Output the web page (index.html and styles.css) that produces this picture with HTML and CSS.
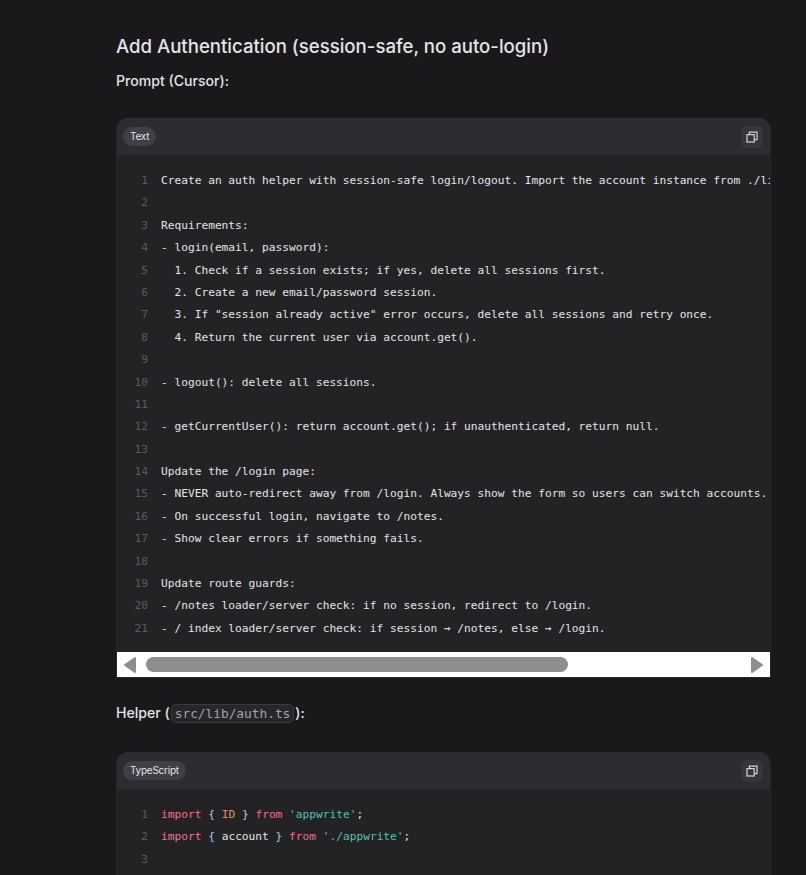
FILE: index.html
```html
<!DOCTYPE html>
<html lang="en">
<head>
    <meta charset="UTF-8">
    <meta name="viewport" content="width=device-width, initial-scale=1.0">
    <title>Add Authentication</title>
    <link rel="stylesheet" href="styles.css">
</head>
<body>
    <main class="doc">
        <h2>Add Authentication (session-safe, no auto-login)</h2>
        <p class="label">Prompt (Cursor):</p>

        <div class="code-card">
            <div class="code-head">
                <span class="lang">Text</span>
                <button class="copy" aria-label="Copy">
                    <svg width="12" height="12" viewBox="0 0 12 12" fill="none" stroke="currentColor" stroke-width="1.2"><rect x="1" y="3.6" width="7.2" height="7.4"/><path d="M3.4 3.4V1.2H11V8.6H8.4"/></svg>
                </button>
            </div>
            <div class="code-body">
                <div class="line"><span class="ln">1</span><span class="lc">Create an auth helper with session-safe login/logout. Import the account instance from ./lib/appwrite.</span></div>
                <div class="line"><span class="ln">2</span><span class="lc"></span></div>
                <div class="line"><span class="ln">3</span><span class="lc">Requirements:</span></div>
                <div class="line"><span class="ln">4</span><span class="lc">- login(email, password):</span></div>
                <div class="line"><span class="ln">5</span><span class="lc">  1. Check if a session exists; if yes, delete all sessions first.</span></div>
                <div class="line"><span class="ln">6</span><span class="lc">  2. Create a new email/password session.</span></div>
                <div class="line"><span class="ln">7</span><span class="lc">  3. If "session already active" error occurs, delete all sessions and retry once.</span></div>
                <div class="line"><span class="ln">8</span><span class="lc">  4. Return the current user via account.get().</span></div>
                <div class="line"><span class="ln">9</span><span class="lc"></span></div>
                <div class="line"><span class="ln">10</span><span class="lc">- logout(): delete all sessions.</span></div>
                <div class="line"><span class="ln">11</span><span class="lc"></span></div>
                <div class="line"><span class="ln">12</span><span class="lc">- getCurrentUser(): return account.get(); if unauthenticated, return null.</span></div>
                <div class="line"><span class="ln">13</span><span class="lc"></span></div>
                <div class="line"><span class="ln">14</span><span class="lc">Update the /login page:</span></div>
                <div class="line"><span class="ln">15</span><span class="lc">- NEVER auto-redirect away from /login. Always show the form so users can switch accounts.</span></div>
                <div class="line"><span class="ln">16</span><span class="lc">- On successful login, navigate to /notes.</span></div>
                <div class="line"><span class="ln">17</span><span class="lc">- Show clear errors if something fails.</span></div>
                <div class="line"><span class="ln">18</span><span class="lc"></span></div>
                <div class="line"><span class="ln">19</span><span class="lc">Update route guards:</span></div>
                <div class="line"><span class="ln">20</span><span class="lc">- /notes loader/server check: if no session, redirect to /login.</span></div>
                <div class="line"><span class="ln">21</span><span class="lc">- / index loader/server check: if session → /notes, else → /login.</span></div>
            </div>
            <div class="hscroll">
                <svg class="arrow" width="14" height="18" viewBox="0 0 14 18"><path d="M12 2V16L2 9Z" fill="#8e8e8e" stroke="#8e8e8e" stroke-width="2" stroke-linejoin="round"/></svg>
                <div class="track"><div class="thumb"></div></div>
                <svg class="arrow" width="14" height="18" viewBox="0 0 14 18"><path d="M2 2V16L12 9Z" fill="#8e8e8e" stroke="#8e8e8e" stroke-width="2" stroke-linejoin="round"/></svg>
            </div>
        </div>

        <p class="label label-helper">Helper (<code>src/lib/auth.ts</code>):</p>

        <div class="code-card">
            <div class="code-head">
                <span class="lang">TypeScript</span>
                <button class="copy" aria-label="Copy">
                    <svg width="12" height="12" viewBox="0 0 12 12" fill="none" stroke="currentColor" stroke-width="1.2"><rect x="1" y="3.6" width="7.2" height="7.4"/><path d="M3.4 3.4V1.2H11V8.6H8.4"/></svg>
                </button>
            </div>
            <div class="code-body">
                <div class="line"><span class="ln">1</span><span class="lc"><span class="kw">import</span> <span class="pn">{</span> <span class="id">ID</span> <span class="pn">}</span> <span class="kw">from</span> <span class="st">'appwrite'</span>;</span></div>
                <div class="line"><span class="ln">2</span><span class="lc"><span class="kw">import</span> <span class="pn">{</span> account <span class="pn">}</span> <span class="kw">from</span> <span class="st">'./appwrite'</span>;</span></div>
                <div class="line"><span class="ln">3</span><span class="lc"></span></div>
                <div class="line"><span class="ln">4</span><span class="lc"><span class="kw">export async function</span> ensureNoSession() {</span></div>
            </div>
        </div>
    </main>
</body>
</html>
```

FILE: styles.css
```css
* {
    margin: 0;
    padding: 0;
    box-sizing: border-box;
}

html, body {
    height: 875px;
    overflow: hidden;
}

body {
    font-family: Inter, 'Liberation Sans', sans-serif;
    color: #e4e4e7;
    background-color: #19191b;
}

.doc {
    width: 655px;
    margin-left: 116px;
    padding-top: 32px;
}

h2 {
    font-size: 18.6px;
    line-height: 28px;
    font-weight: 500;
    margin-bottom: 9px;
}

.label {
    font-size: 14.1px;
    line-height: 24px;
    font-weight: 550;
    margin-bottom: 25px;
}

.label-helper {
    margin-top: 23px;
    margin-bottom: 25.8px;
}

.label code {
    font-family: 'DejaVu Sans Mono', monospace;
    font-size: 12.8px;
    font-weight: 400;
    color: #a1a1aa;
    background: #27272a;
    border: 1px solid #3a3a3f;
    border-radius: 5px;
    padding: 1px 3px;
    margin: 0 1px;
}

/* Code cards */
.code-card {
    border: 1px solid #27272a;
    border-top: none;
    border-radius: 12px 12px 0 0;
    background: #232326;
    overflow: hidden;
}

.code-head {
    display: flex;
    justify-content: space-between;
    align-items: center;
    height: 37px;
    padding: 0 7px 0 6px;
    background: #2c2c31;
}

.lang {
    font-size: 10px;
    letter-spacing: -0.25px;
    line-height: 19px;
    padding: 0 7px;
    border-radius: 10px;
    color: #e4e4e7;
    background: #3f3f46;
}

.copy {
    display: flex;
    align-items: center;
    justify-content: center;
    width: 22px;
    height: 22px;
    border: none;
    border-radius: 6px;
    color: #d4d4d8;
    background: #36363b;
}

.code-body {
    padding: 15px 0 12px;
    font-family: 'DejaVu Sans Mono', monospace;
    font-size: 11.2px;
    color: #e4e4e7;
    overflow: hidden;
}

.line {
    display: flex;
    height: 22.4px;
    line-height: 22.4px;
    white-space: pre;
}

.ln {
    flex: none;
    width: 31px;
    margin-right: 13px;
    text-align: right;
    color: #5a5a60;
}

.kw { color: #f2708a; }
.id { color: #e8895a; }
.st { color: #5bbfb5; }
.pn { color: #a9cbe8; }

/* Horizontal scrollbar */
.hscroll {
    display: flex;
    align-items: center;
    gap: 9px;
    height: 25px;
    padding: 0 6px;
    background: #fff;
}

.arrow {
    flex: none;
}

.track {
    flex: 1;
}

.thumb {
    width: 422px;
    height: 15px;
    border-radius: 8px;
    background: #8e8e8e;
}
```
